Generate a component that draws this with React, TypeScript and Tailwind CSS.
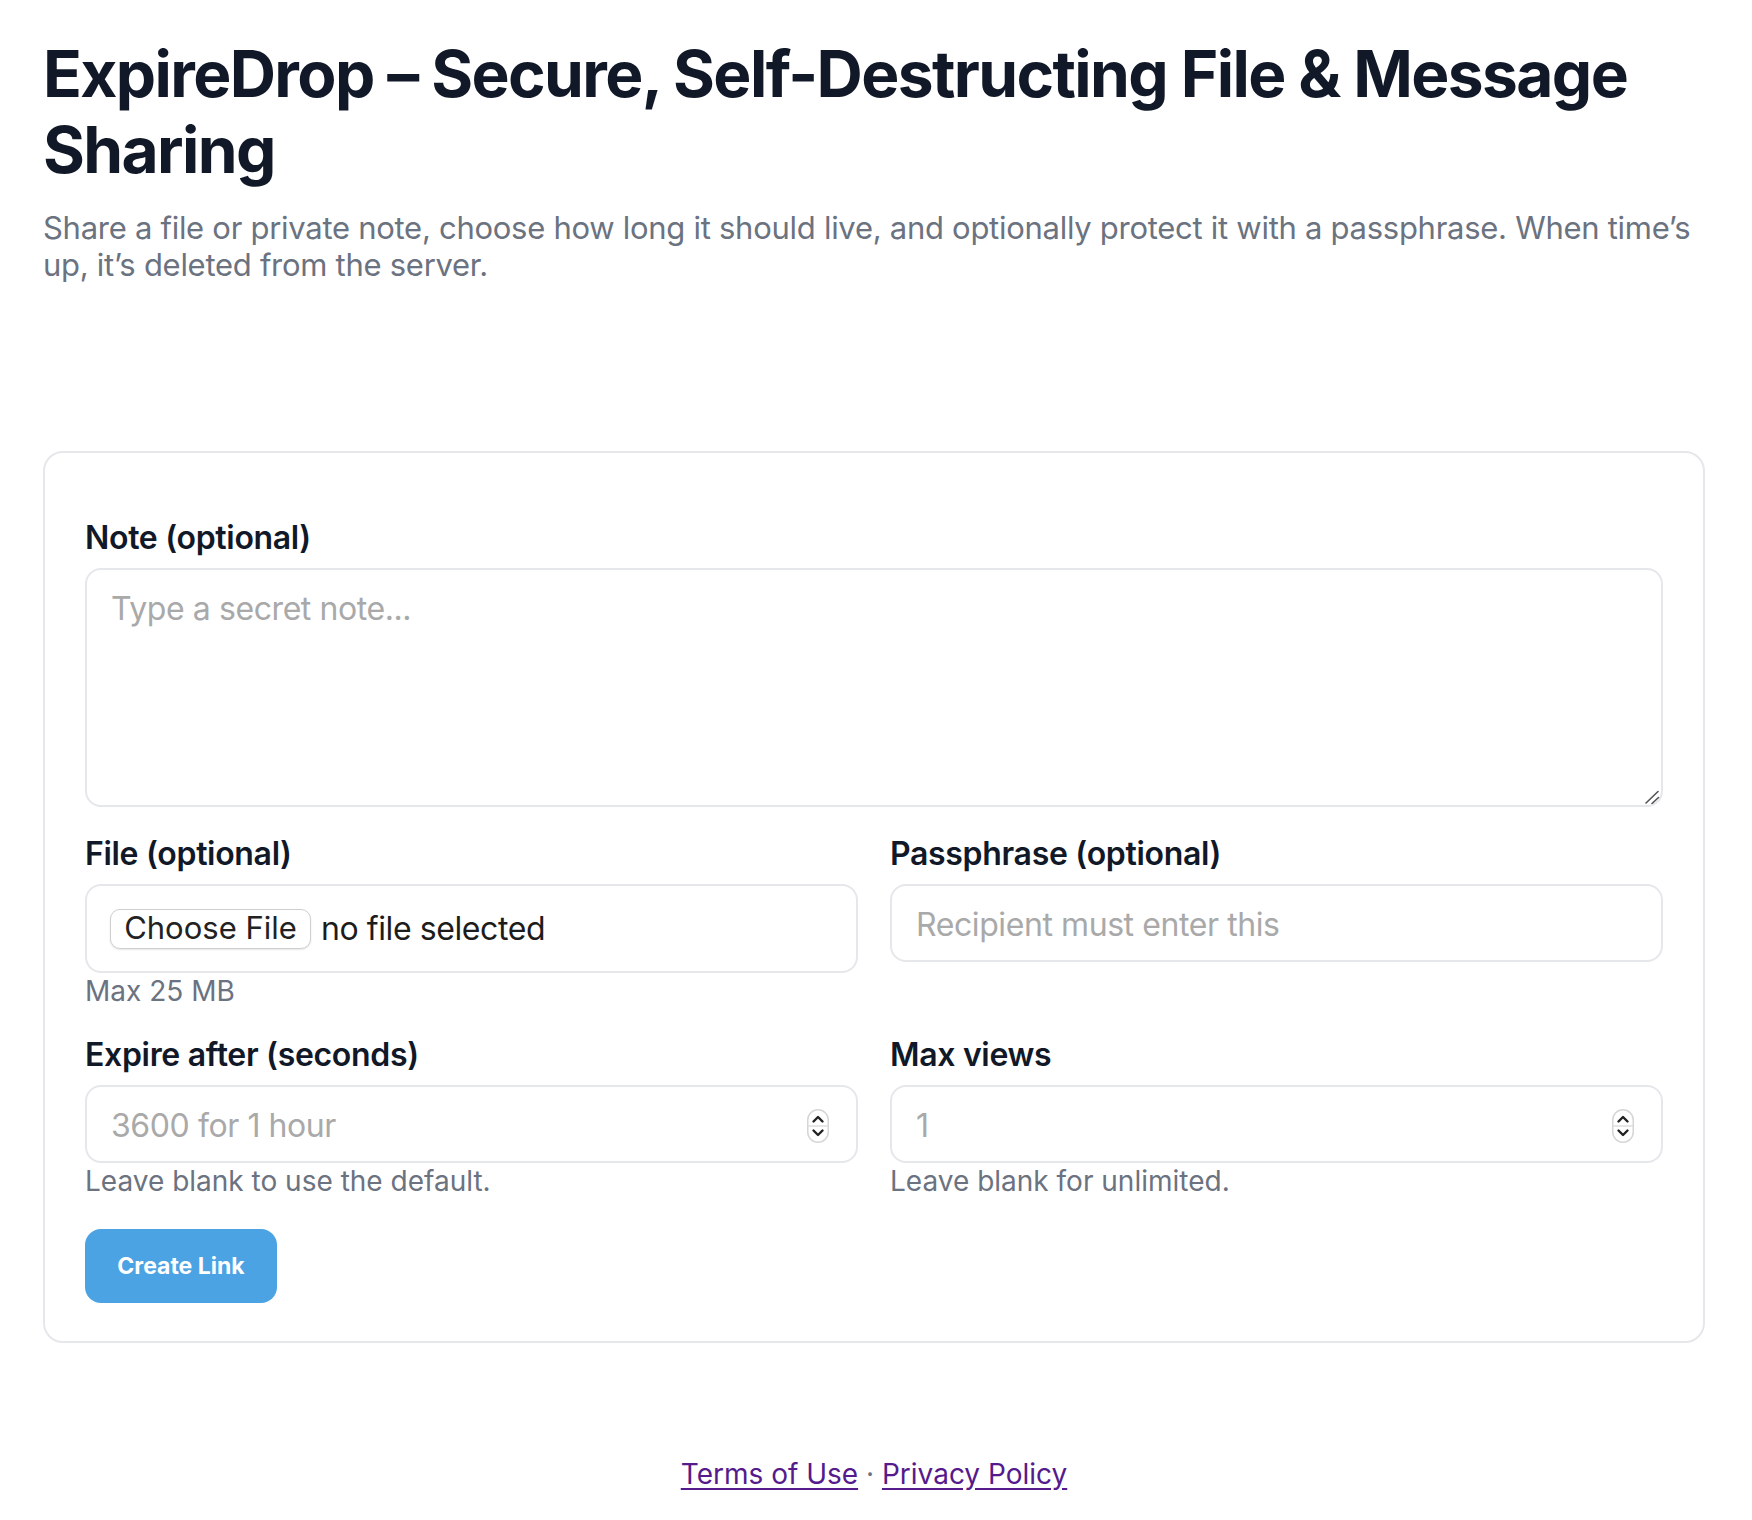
import type React from 'react';

const inputCls =
  'block w-full rounded-[16px] border-2 border-[#e5e7eb] bg-white px-[24px] pt-[19px] pb-[15px] text-[32px] leading-[40px] tracking-[-0.013em] text-[#111827] outline-none placeholder:text-[#a9a9a9]';

/**
 * Small label above a field
 */
function FieldLabel({ children }: { children: React.ReactNode }): React.JSX.Element {
  return (
    <label className="mb-[10px] block text-[32px] leading-[40px] font-semibold tracking-[-0.01em] text-[#111827]">
      {children}
    </label>
  );
}

function HelpText({ children }: { children: React.ReactNode }): React.JSX.Element {
  return <p className="mt-[1px] text-[28px] leading-[35px] text-[#6b7280]">{children}</p>;
}

// Safari-style stepper drawn over the number field
function Stepper(): React.JSX.Element {
  return (
    <svg
      className="pointer-events-none absolute top-[24px] right-[29px]"
      width="22"
      height="34"
      viewBox="0 0 22 34"
      fill="none"
    >
      <rect x="0.75" y="0.75" width="20.5" height="32.5" rx="10.25" fill="#fff" stroke="#d6d6d6" strokeWidth="1.5" />
      <line x1="1" y1="17" x2="21" y2="17" stroke="#dedede" strokeWidth="1.5" />
      <path d="M6.5 12.5 L11 8 L15.5 12.5" stroke="#222" strokeWidth="2.4" strokeLinecap="round" strokeLinejoin="round" />
      <path d="M6.5 21.5 L11 26 L15.5 21.5" stroke="#222" strokeWidth="2.4" strokeLinecap="round" strokeLinejoin="round" />
    </svg>
  );
}

function NumberField({ placeholder }: { placeholder: string }): React.JSX.Element {
  return (
    <div className="relative">
      <input type="text" inputMode="numeric" placeholder={placeholder} className={inputCls} />
      <Stepper />
    </div>
  );
}

export default function App(): React.JSX.Element {
  return (
    <div className="min-h-screen bg-white pt-[36px] pr-[47px] pb-[27px] pl-[43px] font-['Inter','Noto_Sans',sans-serif] antialiased">
      {/* Header */}
      <h1 className="text-[64px] leading-[76px] font-bold tracking-[-0.025em] text-[#111827]">
        ExpireDrop – Secure, Self-Destructing File &amp; Message Sharing
      </h1>
      <p className="mt-[21px] text-[31px] leading-[37px] tracking-[-0.009em] text-[#6b7280]">
        Share a file or private note, choose how long it should live, and optionally protect it with a
        passphrase. When time’s up, it’s deleted from the server.
      </p>

      {/* Form card */}
      <form className="mt-[168px] rounded-[20px] border-2 border-[#e5e7eb] bg-white px-[40px] pt-[65px] pb-[38px]">
        <FieldLabel>Note (optional)</FieldLabel>
        <div className="relative">
          <textarea
            placeholder="Type a secret note..."
            className={`${inputCls} h-[239px] resize-none`}
          />
          <svg
            className="pointer-events-none absolute right-[3px] bottom-[3px]"
            width="16"
            height="16"
            viewBox="0 0 16 16"
            fill="none"
          >
            <path d="M2 15 L14 3.5" stroke="#555" strokeWidth="1.6" strokeLinecap="round" />
            <path d="M8 15.5 L14.5 9.5" stroke="#555" strokeWidth="1.6" strokeLinecap="round" />
          </svg>
        </div>

        <div className="mt-[27px] grid grid-cols-2 gap-x-[32px]">
          <div>
            <FieldLabel>File (optional)</FieldLabel>
            <div className="flex h-[89px] items-center rounded-[16px] border-2 border-[#e5e7eb] bg-white pl-[23px]">
              <span className="flex h-[40px] w-[201px] items-center justify-center rounded-[10px] border border-[#cfcfcf] bg-white text-[31px] text-[#222] shadow-[0_1px_2px_rgba(0,0,0,0.1)]">
                Choose File
              </span>
              <span className="ml-[10px] text-[32px] tracking-[-0.013em] text-[#1c1c1c]">no file selected</span>
            </div>
            <HelpText>Max 25 MB</HelpText>
          </div>
          <div>
            <FieldLabel>Passphrase (optional)</FieldLabel>
            <input type="password" placeholder="Recipient must enter this" className={inputCls} />
          </div>

          <div className="mt-[26px]">
            <FieldLabel>Expire after (seconds)</FieldLabel>
            <NumberField placeholder="3600 for 1 hour" />
            <HelpText>Leave blank to use the default.</HelpText>
          </div>
          <div className="mt-[26px]">
            <FieldLabel>Max views</FieldLabel>
            <NumberField placeholder="1" />
            <HelpText>Leave blank for unlimited.</HelpText>
          </div>
        </div>

        <button
          type="button"
          className="mt-[30px] flex h-[74px] w-[192px] items-center justify-center rounded-[16px] bg-[#4ba3e3] text-[23px] font-bold text-white"
        >
          Create Link
        </button>
      </form>

      {/* Footer */}
      <footer className="mt-[113px] text-center text-[28px] leading-[36px] text-[#6b7280]">
        <a href="#terms" className="text-[#551a8b] underline underline-offset-[4px]">
          Terms of Use
        </a>
        {' · '}
        <a href="#privacy" className="text-[#551a8b] underline underline-offset-[4px]">
          Privacy Policy
        </a>
      </footer>
    </div>
  );
}
